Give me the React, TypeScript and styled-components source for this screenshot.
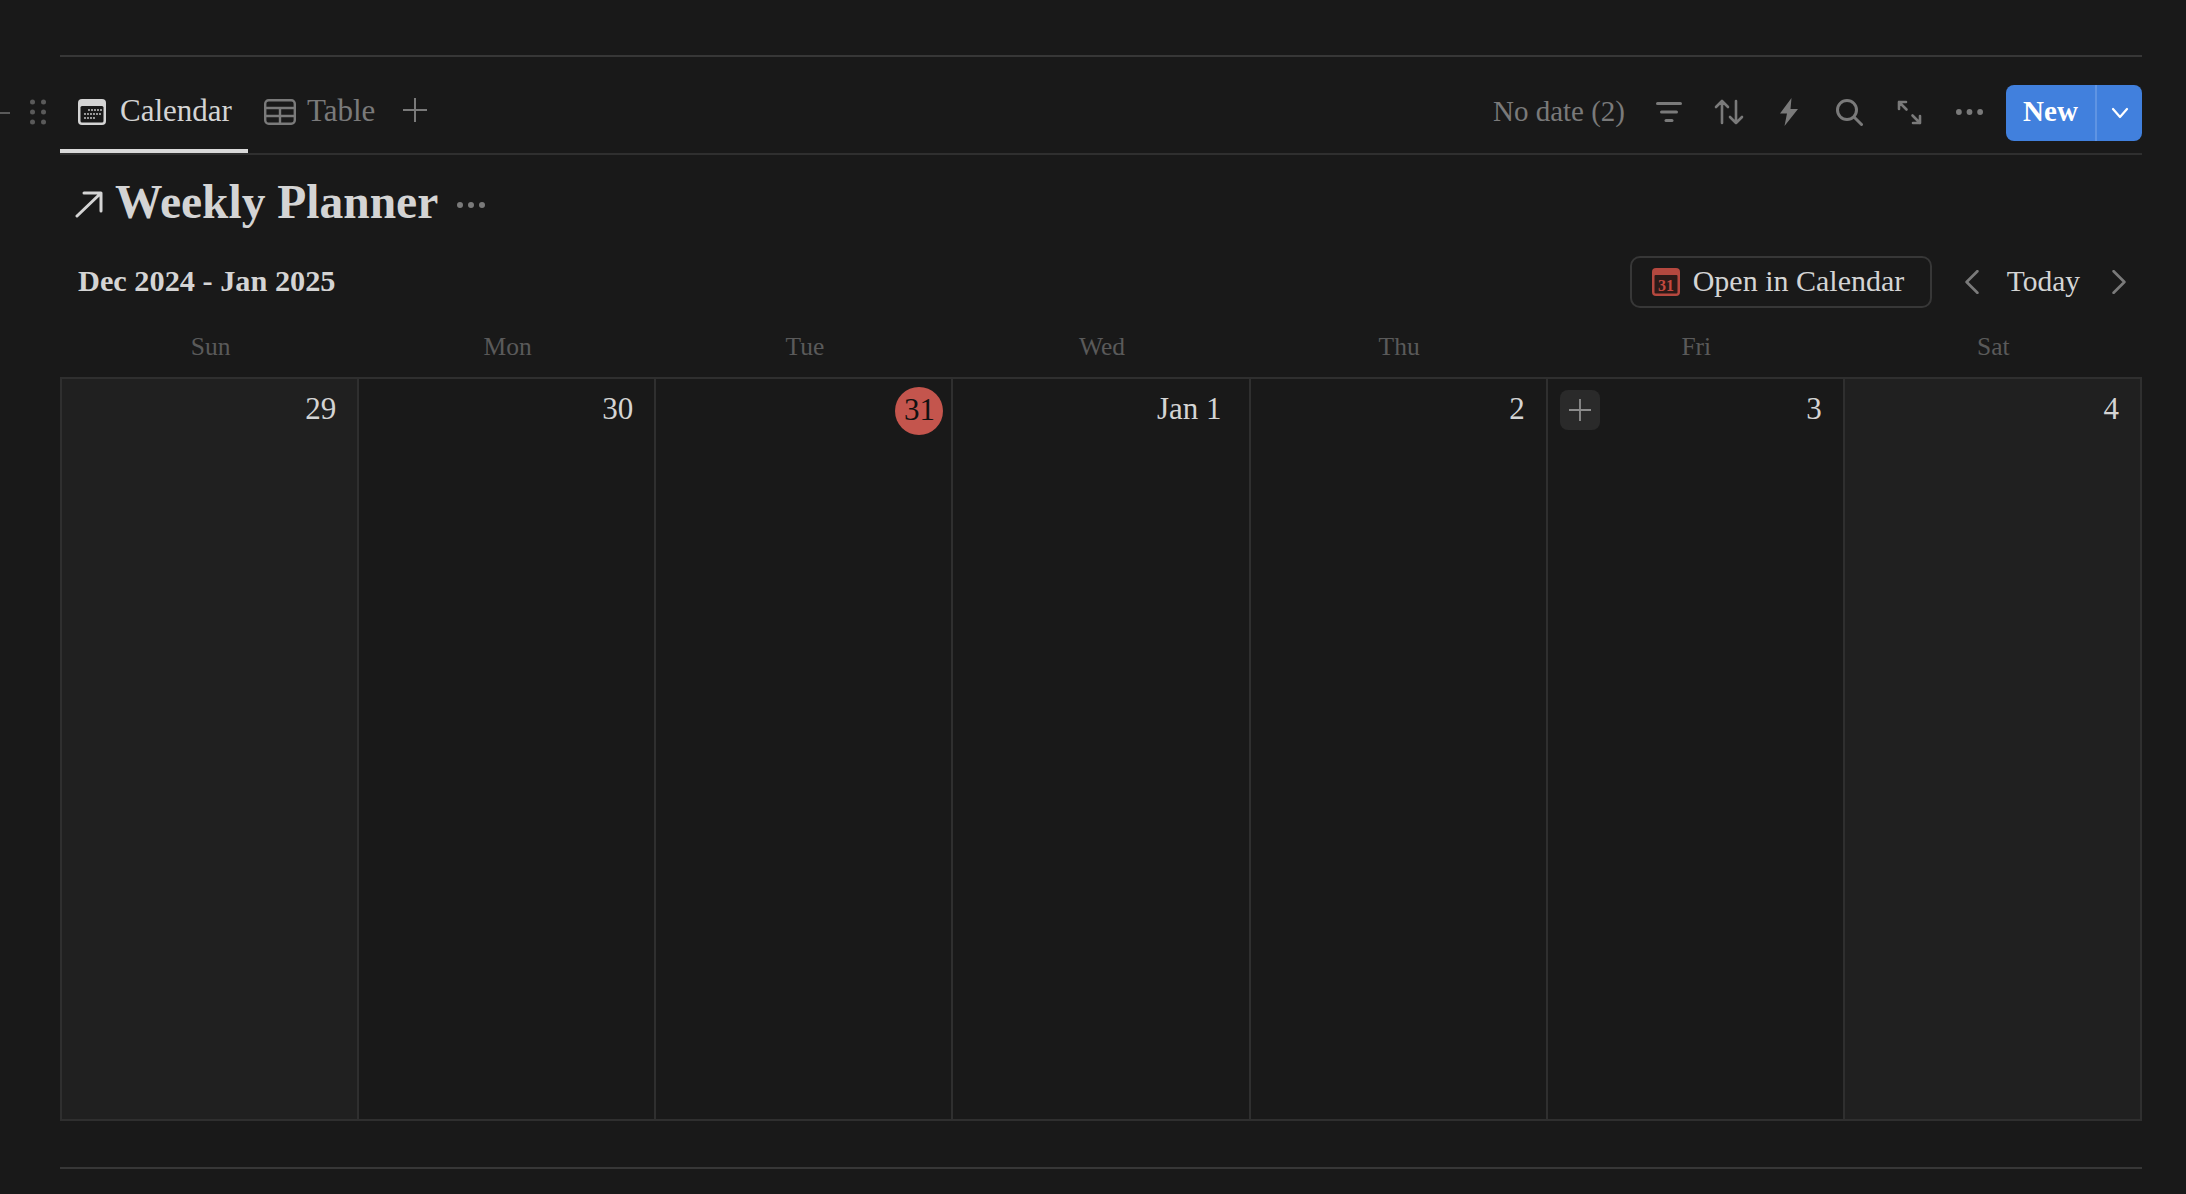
import React from "react"
import styled, { createGlobalStyle } from "styled-components"

const serif = `"Liberation Serif", "Times New Roman", serif`

const GlobalStyle = createGlobalStyle`
    html, body {
        margin: 0;
        padding: 0;
        background: #191919;
    }
    * {
        box-sizing: border-box;
    }
`

interface DayItem {
    label: string
    weekday: string
    weekend?: boolean
    today?: boolean
    hovered?: boolean
    inset?: number
}

const days: DayItem[] = [
    { label: "29", weekday: "Sun", weekend: true },
    { label: "30", weekday: "Mon" },
    { label: "31", weekday: "Tue", today: true },
    { label: "Jan 1", weekday: "Wed", inset: 27 },
    { label: "2", weekday: "Thu" },
    { label: "3", weekday: "Fri", hovered: true },
    { label: "4", weekday: "Sat", weekend: true },
]

const CalendarIcon = () => (
    <svg width="28" height="26" viewBox="0 0 28 26">
        <rect x="0" y="0" width="28" height="26" rx="4" fill="#d4d4d4" />
        <rect x="2.5" y="7" width="23" height="16.5" rx="1.5" fill="#191919" />
        {[0, 1, 2, 3, 4].map((c) => (
            <circle key={`a${c}`} cx={11 + c * 3} cy="11" r="0.9" fill="#d4d4d4" />
        ))}
        {[0, 1, 2, 3, 4, 5].map((c) => (
            <circle key={`b${c}`} cx={7 + c * 3} cy="15" r="0.9" fill="#d4d4d4" />
        ))}
        {[0, 1, 2, 3].map((c) => (
            <circle key={`c${c}`} cx={7 + c * 3} cy="19" r="0.9" fill="#d4d4d4" />
        ))}
    </svg>
)

const TableIcon = () => (
    <svg width="32" height="26" viewBox="0 0 32 26" fill="none" stroke="#7a7a7a" strokeWidth="2.4">
        <rect x="1.2" y="1.2" width="29.6" height="23.6" rx="3.5" />
        <path d="M1.5 9h29M1.5 17h29M16 9v16" />
    </svg>
)

const PlusIcon = ({ size, color }: { size: number; color: string }) => (
    <svg width={size} height={size} viewBox="0 0 24 24" fill="none" stroke={color} strokeWidth="2">
        <path d="M12 0v24M0 12h24" />
    </svg>
)

const ArrowIcon = () => (
    <svg width="28" height="28" viewBox="0 0 28 28" fill="none" stroke="#d4d4d4" strokeWidth="3" strokeLinecap="round" strokeLinejoin="round">
        <path d="M2 26L25 4M9 3h17v18" />
    </svg>
)

const FilterIcon = () => (
    <svg width="26" height="22" viewBox="0 0 26 22" fill="#7a7a7a">
        <rect x="0" y="1" width="26" height="3" rx="1.5" />
        <rect x="4" y="9.5" width="18" height="3" rx="1.5" />
        <rect x="8.5" y="18" width="9" height="3" rx="1.5" />
    </svg>
)

const SortIcon = () => (
    <svg width="30" height="26" viewBox="0 0 30 26" fill="none" stroke="#7a7a7a" strokeWidth="2.6" strokeLinecap="round" strokeLinejoin="round">
        <path d="M8 24V2M2 8l6-6 6 6M22 2v22M16 18l6 6 6-6" />
    </svg>
)

const BoltIcon = () => (
    <svg width="18" height="28" viewBox="0 0 18 28" fill="#7a7a7a">
        <path d="M11.500 0L0 15.500h7L4.500 28 18 11h-7.500z" />
    </svg>
)

const SearchIcon = () => (
    <svg width="27" height="27" viewBox="0 0 27 27" fill="none" stroke="#7a7a7a" strokeWidth="3" strokeLinecap="round">
        <circle cx="11" cy="11" r="9.500" />
        <path d="M18 18l7.500 7.500" />
    </svg>
)

const ExpandIcon = () => (
    <svg width="25" height="25" viewBox="0 0 25 25" fill="none" stroke="#7a7a7a" strokeWidth="2.6" strokeLinecap="round" strokeLinejoin="round">
        <path d="M2 9V2h7M2 2l7.500 7.500M23 16v7h-7M23 23l-7.500-7.500" />
    </svg>
)

const DotsIcon = ({ color, width }: { color: string; width: number }) => (
    <svg width={width} height="6" viewBox="0 0 28 6" fill={color}>
        <circle cx="3" cy="3" r="3" />
        <circle cx="14" cy="3" r="3" />
        <circle cx="25" cy="3" r="3" />
    </svg>
)

const GripIcon = () => (
    <svg width="16" height="26" viewBox="0 0 16 26" fill="#5a5a5a">
        {[3, 13, 23].map((y) => (
            <React.Fragment key={y}>
                <circle cx="2.500" cy={y} r="2.500" />
                <circle cx="13.500" cy={y} r="2.500" />
            </React.Fragment>
        ))}
    </svg>
)

const Chevron = ({ dir, color, size }: { dir: "left" | "right" | "down"; color: string; size: number }) => (
    <svg width={size} height={size} viewBox="0 0 20 20" fill="none" stroke={color} strokeWidth="2.200" strokeLinecap="round" strokeLinejoin="round">
        {dir === "left" && <path d="M14.500 1l-9 9 9 9" />}
        {dir === "right" && <path d="M5.500 1l9 9-9 9" />}
        {dir === "down" && <path d="M3 6l7 8 7-8" />}
    </svg>
)

const GoogleCalendarIcon = () => (
    <svg width="28" height="28" viewBox="0 0 28 28">
        <rect width="28" height="28" rx="4" fill="#b5483f" />
        <rect x="2.500" y="7" width="23" height="18.500" rx="1" fill="#2c1a18" />
        <text x="14" y="23" textAnchor="middle" fontFamily={serif} fontWeight="700" fontSize="16" fill="#c4493f">
            31
        </text>
    </svg>
)

export default function App() {
    return (
        <Page>
            <GlobalStyle />
            <Rule />
            <TabBar>
                <EdgeDash />
                <Grip>
                    <GripIcon />
                </Grip>
                <Tab active>
                    <CalendarIcon />
                    Calendar
                </Tab>
                <Tab>
                    <TableIcon />
                    Table
                </Tab>
                <AddView>
                    <PlusIcon size={24} color="#7a7a7a" />
                </AddView>
                <Actions>
                    <NoDate>No date (2)</NoDate>
                    <ActionIcon><FilterIcon /></ActionIcon>
                    <ActionIcon><SortIcon /></ActionIcon>
                    <ActionIcon><BoltIcon /></ActionIcon>
                    <ActionIcon><SearchIcon /></ActionIcon>
                    <ActionIcon><ExpandIcon /></ActionIcon>
                    <ActionIcon><DotsIcon color="#7a7a7a" width={27} /></ActionIcon>
                    <NewButton>
                        <NewLabel>New</NewLabel>
                        <NewCaret>
                            <Chevron dir="down" color="#ffffff" size={20} />
                        </NewCaret>
                    </NewButton>
                </Actions>
            </TabBar>
            <TitleRow>
                <ArrowIcon />
                <Title>Weekly Planner</Title>
                <DotsIcon color="#7a7a7a" width={28} />
            </TitleRow>
            <RangeRow>
                <RangeLabel>Dec 2024 - Jan 2025</RangeLabel>
                <OpenButton>
                    <GoogleCalendarIcon />
                    Open in Calendar
                </OpenButton>
                <Pager>
                    <Chevron dir="left" color="#7a7a7a" size={24} />
                    <Today>Today</Today>
                    <Chevron dir="right" color="#7a7a7a" size={24} />
                </Pager>
            </RangeRow>
            <Weekdays>
                {days.map((d) => (
                    <Weekday key={d.weekday}>{d.weekday}</Weekday>
                ))}
            </Weekdays>
            <MonthGrid>
                {days.map((d) => (
                    <DayCell key={d.weekday} $weekend={d.weekend}>
                        {d.hovered && (
                            <AddEvent>
                                <PlusIcon size={22} color="#8c8c8c" />
                            </AddEvent>
                        )}
                        {d.today ? <TodayBadge>{d.label}</TodayBadge> : <DayLabel $inset={d.inset}>{d.label}</DayLabel>}
                    </DayCell>
                ))}
            </MonthGrid>
            <BottomRule />
        </Page>
    )
}

const Page = styled.div`
    position: relative;
    width: 2186px;
    height: 1194px;
    overflow: hidden;
    padding: 55px 44px 0 60px;
    background: #191919;
    font-family: ${serif};
`

const Rule = styled.div`
    height: 2px;
    background: #373737;
`

const BottomRule = styled(Rule)`
    margin-top: 46px;
`

const TabBar = styled.div`
    position: relative;
    display: flex;
    align-items: stretch;
    height: 98px;
    border-bottom: 2px solid #2f2f2f;
`

const EdgeDash = styled.div`
    position: absolute;
    left: -60px;
    top: 55px;
    width: 10px;
    height: 2px;
    background: #5a5a5a;
`

const Grip = styled.div`
    position: absolute;
    left: -30px;
    top: 42px;
    display: flex;
`

const Tab = styled.div<{ active?: boolean }>`
    display: flex;
    align-items: center;
    gap: ${(p) => (p.active ? 14 : 11)}px;
    height: 96px;
    padding: 15px 16px 0 ${(p) => (p.active ? 18 : 16)}px;
    margin-bottom: -2px;
    font-size: 31px;
    color: ${(p) => (p.active ? "#d4d4d4" : "#7a7a7a")};
    border-bottom: 4px solid ${(p) => (p.active ? "#d9d9d9" : "transparent")};
    svg {
        flex: none;
        margin-top: 3px;
    }
`

const AddView = styled.div`
    display: flex;
    align-items: center;
    margin-left: 12px;
    padding-top: 10px;
`

const Actions = styled.div`
    display: flex;
    align-items: center;
    margin-left: auto;
    padding-top: 16px;
`

const NoDate = styled.div`
    font-size: 29px;
    color: #7a7a7a;
    margin: -4px 29px 0 0;
`

const ActionIcon = styled.div`
    display: flex;
    align-items: center;
    justify-content: center;
    width: 30px;
    margin-right: 30px;
    margin-top: -2px;
`

const NewButton = styled.div`
    display: flex;
    height: 56px;
    margin-left: -8px;
    border-radius: 8px;
    background: #4180dd;
    color: #ffffff;
`

const NewLabel = styled.div`
    display: flex;
    align-items: center;
    justify-content: center;
    width: 89px;
    padding-bottom: 3px;
    font-size: 29px;
    font-weight: 700;
`

const NewCaret = styled.div`
    display: flex;
    align-items: center;
    justify-content: center;
    width: 47px;
    border-left: 2px solid #5f94e3;
`

const TitleRow = styled.div`
    display: flex;
    align-items: center;
    height: 70px;
    margin-top: 12px;
    padding-left: 15px;
    svg:first-child {
        margin-top: 4px;
    }
    svg:last-child {
        margin-top: 6px;
        margin-left: 19px;
    }
`

const Title = styled.div`
    margin-left: 12px;
    font-size: 47.5px;
    font-weight: 700;
    color: #d4d4d4;
`

const RangeRow = styled.div`
    display: flex;
    align-items: center;
    height: 52px;
    margin-top: 19px;
    padding-left: 18px;
`

const RangeLabel = styled.div`
    padding-bottom: 2px;
    font-size: 30.3px;
    font-weight: 700;
    color: #d4d4d4;
    margin-right: auto;
`

const OpenButton = styled.div`
    display: flex;
    align-items: center;
    gap: 13px;
    width: 302px;
    height: 52px;
    padding: 0 0 2px 20px;
    border: 2px solid #373737;
    border-radius: 10px;
    font-size: 30px;
    color: #d4d4d4;
    svg {
        margin-top: 2px;
    }
`

const Pager = styled.div`
    display: flex;
    align-items: center;
    margin-left: 28px;
    padding-right: 11px;
`

const Today = styled.div`
    margin: 0 27px 2px 23px;
    font-size: 29.500px;
    color: #d4d4d4;
`

const Weekdays = styled.div`
    display: grid;
    grid-template-columns: repeat(7, 1fr);
    height: 69px;
    padding: 8px 0 0 2px;
`

const Weekday = styled.div`
    display: flex;
    align-items: center;
    justify-content: center;
    font-size: 25.500px;
    color: #5a5a5a;
`

const MonthGrid = styled.div`
    display: grid;
    grid-template-columns: repeat(7, 1fr);
    height: 744px;
    border-top: 2px solid #2f2f2f;
    border-bottom: 2px solid #2f2f2f;
    border-right: 2px solid #2f2f2f;
`

const DayCell = styled.div<{ $weekend?: boolean }>`
    position: relative;
    display: flex;
    justify-content: flex-end;
    padding-top: 8px;
    background: ${(p) => (p.$weekend ? "#202020" : "#191919")};
    border-left: 2px solid #2f2f2f;
`

const DayLabel = styled.div<{ $inset?: number }>`
    height: 48px;
    padding-right: ${(p) => p.$inset ?? 21}px;
    line-height: 43px;
    font-size: 31px;
    color: #d4d4d4;
`

const TodayBadge = styled.div`
    display: flex;
    align-items: center;
    justify-content: center;
    width: 48px;
    height: 48px;
    margin-right: 8px;
    padding-bottom: 2px;
    border-radius: 50%;
    background: #c4554d;
    font-size: 31px;
    color: #111111;
`

const AddEvent = styled.div`
    position: absolute;
    left: 12px;
    top: 11px;
    display: flex;
    align-items: center;
    justify-content: center;
    width: 40px;
    height: 40px;
    border-radius: 8px;
    background: #2a2a2a;
`
